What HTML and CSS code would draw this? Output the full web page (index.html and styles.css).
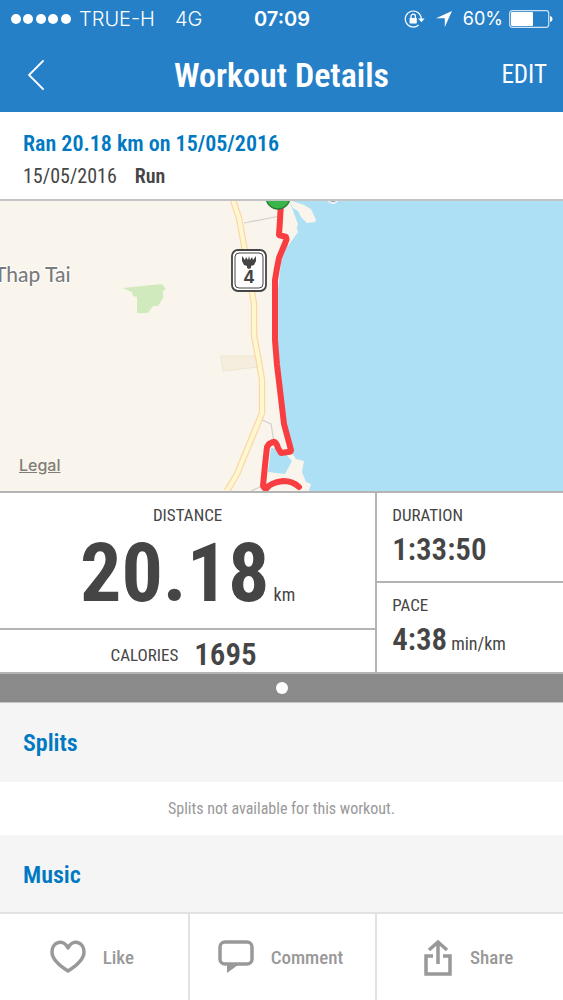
FILE: index.html
```
<!DOCTYPE html>
<html lang="en">

<head>
    <meta charset="UTF-8">
    <meta name="viewport" content="width=device-width, initial-scale=1.0">
    <link rel="stylesheet" href="styles.css">
    <title>Workout Details</title>
</head>

<body>

    <header class="top">
        <div class="status-bar">
            <div class="status-left">
                <svg class="signal" width="60" height="10" viewBox="0 0 60 10" fill="#fff">
                    <circle cx="5" cy="5" r="5" />
                    <circle cx="17" cy="5" r="5" />
                    <circle cx="30" cy="5" r="5" />
                    <circle cx="42" cy="5" r="5" />
                    <circle cx="55" cy="5" r="5" />
                </svg>
                <span class="carrier">TRUE-H</span>
                <span>4G</span>
            </div>
            <span class="clock">07:09</span>
            <div class="status-right">
                <svg width="21" height="18" viewBox="0 0 21 18" fill="none" stroke="#fff">
                    <path d="M17.3 9A8 8 0 1 0 14.6 15" stroke-width="1.2" />
                    <path d="M14.2 8.5h6.4l-3.2 3.8z" fill="#fff" stroke="none" />
                    <path d="M7 8.3V6.4a2.2 2.2 0 0 1 4.4 0v1.9" stroke-width="1.3" />
                    <rect x="5.6" y="8" width="7.2" height="5.4" rx="0.6" fill="#fff" stroke="none" />
                </svg>
                <svg class="location" width="16" height="16" viewBox="0 0 16 16" fill="#fff">
                    <path d="M16 0L8.8 16V7.3H0z" />
                </svg>
                <span class="charge">60%</span>
                <svg class="battery" width="44" height="18" viewBox="0 0 44 18">
                    <rect x="0.7" y="0.7" width="39" height="16.6" rx="2.5" fill="none" stroke="#cfe3f4" stroke-width="1.2" />
                    <rect x="2" y="2" width="22" height="14" rx="1" fill="#fff" />
                    <path d="M41 6q2.6 0.5 2.6 3T41 12z" fill="#fff" />
                </svg>
            </div>
        </div>
        <nav class="nav-bar">
            <button class="back" aria-label="Back">
                <svg width="16" height="30" viewBox="0 0 16 30" fill="none" stroke="#fff" stroke-width="1.8" stroke-linecap="round">
                    <path d="M15 1L1 15L15 29" />
                </svg>
            </button>
            <h1>Workout Details</h1>
            <button class="edit">EDIT</button>
        </nav>
    </header>

    <section class="summary">
        <h2>Ran 20.18 km on 15/05/2016</h2>
        <p><span>15/05/2016</span><strong>Run</strong></p>
    </section>

    <section class="map">
        <svg class="map-canvas" viewBox="0 1 563 290" preserveAspectRatio="xMidYMid slice">
            <rect width="563" height="291" fill="#f9f4ec" />
            <!-- sea -->
            <path d="M289 0L298 24L294 35L287 46L281 62L278 90L277 140L280 190L285 225L291 252L296 259L304 261L302 272L306 282L311 284L309 291H563V0z" fill="#ade0f5" />
            <path d="M289 0L304 5L311 9L316 20L315 22L307 23L301 17L298 11L293 8z" fill="#f9f4ec" />
            <path d="M271 248L281 249L292 261L285 274L268 272z" fill="#ade0f5" />
            <circle cx="333" cy="-2" r="5" fill="#98999b" stroke="#eef4f6" stroke-width="2" />
            <!-- land -->
            <path d="M287 0L298 32L288 46L282 36L282 0z" fill="#f9f4ec" />
            <path d="M123 88L162 84L166 89L163 91V98L158 106H153L148 113H137V97L133 96L132 92z" fill="#d0eabe" />
            <path d="M221 156H258V167L223 171z" fill="#f5edde" stroke="#efe5d0" />
            <path d="M244 23L280 16M262 220L271 224L274 242M251 291L262 286" fill="none" stroke="#d3d0c9" stroke-width="1.2" />
            <!-- highway -->
            <path d="M233 0L239 18L247 62L254 104L254 135L259 162L262 180V213L251 240L237 274L227 291" fill="none" stroke="#fad9a3" stroke-width="6.5" />
            <path d="M233 0L239 18L247 62L254 104L254 135L259 162L262 180V213L251 240L237 274L227 291" fill="none" stroke="#fff6d2" stroke-width="4" />
            <!-- route -->
            <path d="M281 2L280 20L279 35L286 37Q287 39 286 41L279 58L277 68L275 80V140L277 165L280 190L284 224L291 250Q291 252 288 252L281 253L278 248Q276 241 273 242L269 244L267 247L265 265L263 286Q265 290 267 288Q270 283 283 281Q293 281 299 287" fill="none" stroke="#f83e40" stroke-width="6" stroke-linejoin="round" stroke-linecap="round" />
            <circle cx="278" cy="-3" r="12" fill="#39b54a" stroke="#267d35" stroke-width="1.3" />
            <!-- road shield -->
            <rect x="232" y="50" width="34" height="41" rx="6" fill="#fff" stroke="#454545" stroke-width="1.8" />
            <rect x="235" y="53" width="28" height="35" rx="4" fill="none" stroke="#454545" />
            <path d="M242 56L245 60L246 57L248 60L249 56L250 60L252 57L253 60L256 56L256 61L254 65L251 66L251 68L249 69L247 68L247 66L244 65L242 61z" fill="#454545" />
            <text class="road-number" x="249" y="83" text-anchor="middle">4</text>
            <text class="town" x="-6" y="82">Thap Tai</text>
        </svg>
        <a class="legal" href="#">Legal</a>
    </section>

    <section class="stats">
        <div class="stats-main">
            <div class="distance">
                <h3>DISTANCE</h3>
                <p><strong>20.18</strong><span class="unit">km</span></p>
            </div>
            <div class="calories">
                <h3>CALORIES</h3>
                <strong>1695</strong>
            </div>
        </div>
        <div class="stats-side">
            <div class="stat">
                <h3>DURATION</h3>
                <p><strong>1:33:50</strong></p>
            </div>
            <div class="stat">
                <h3>PACE</h3>
                <p><strong>4:38</strong><span class="unit">min/km</span></p>
            </div>
        </div>
    </section>

    <div class="pager"><span class="dot"></span></div>

    <section class="details">
        <h2>Splits</h2>
        <p>Splits not available for this workout.</p>
        <h2>Music</h2>
    </section>

    <footer class="actions">
        <button>
            <svg width="36" height="34" viewBox="0 0 36 34" fill="none" stroke="#999" stroke-width="3.5" stroke-linejoin="round">
                <path d="M18 31C10 26 2 20 2 12C2 1 14 -1 18 8C22 -1 34 1 34 12C34 20 26 26 18 31z" />
            </svg>
            <span>Like</span>
        </button>
        <button>
            <svg width="36" height="34" viewBox="0 0 36 34" fill="none" stroke="#999" stroke-width="3.5">
                <rect x="2" y="2" width="32" height="22" rx="5" />
                <path d="M9 25V33L20 25z" fill="#999" stroke="none" />
            </svg>
            <span>Comment</span>
        </button>
        <button>
            <svg width="30" height="37" viewBox="0 0 30 37" fill="none" stroke="#999" stroke-width="3.5">
                <path d="M10 17H3V35H27V17H20" />
                <path d="M15 25V3M6 11L15 3L24 11" />
            </svg>
            <span>Share</span>
        </button>
    </footer>

</body>

</html>
```
FILE: styles.css
```
* {
    box-sizing: border-box;
}

body {
    display: flex;
    flex-direction: column;
    min-height: 100vh;
    margin: 0;
    background-color: #f5f5f5;
    color: #454545;
    font-family: 'Roboto Condensed', Roboto, sans-serif;
}

h1, h2, h3, p {
    margin: 0;
}

button {
    border: none;
    background: none;
    padding: 0;
    font-family: inherit;
    cursor: pointer;
}

svg {
    display: block;
    flex-shrink: 0;
}

.top {
    background-color: #2680c8;
    color: #fff;
}

.status-bar {
    display: grid;
    grid-template-columns: 1fr auto 1fr;
    align-items: center;
    height: 37px;
    padding: 0 10px 0 11px;
    font-family: Inter, sans-serif;
    font-size: 20px;
    font-weight: 300;
}

.status-left,
.status-right {
    display: flex;
    align-items: center;
}

.status-right {
    justify-content: flex-end;
}

.carrier {
    margin: 0 20px 0 8px;
}

.clock {
    font-weight: 600;
}

.charge {
    font-size: 18px;
    font-weight: 400;
}

.location {
    margin: 0 11px;
}

.battery {
    margin-left: 6px;
}

.nav-bar {
    display: grid;
    grid-template-columns: 1fr auto 1fr;
    align-items: center;
    height: 75px;
    padding: 0 16px;
}

.nav-bar h1 {
    font-size: 34px;
    font-weight: 600;
    line-height: 40px;
}

.back {
    justify-self: start;
    padding: 0 12px;
}

.edit {
    justify-self: end;
    color: #fff;
    font-size: 25px;
}

.summary {
    padding: 16px 23px 7px;
    border-bottom: 2px solid #c4c4c4;
    background-color: #fff;
}

.summary h2 {
    color: #0079c2;
    font-size: 22px;
    font-weight: 600;
    line-height: 32px;
}

.summary p {
    display: flex;
    gap: 18px;
    font-size: 20px;
    line-height: 32px;
}

.summary strong {
    font-weight: 600;
}

.map {
    position: relative;
    overflow: hidden;
}

.map-canvas {
    width: 100%;
}

.town {
    fill: #7b7b7b;
    stroke: #fff;
    stroke-width: 2px;
    paint-order: stroke;
    font-family: Lato, sans-serif;
    font-size: 21px;
    font-weight: 500;
}

.road-number {
    fill: #454545;
    font-family: Inter, sans-serif;
    font-size: 17px;
    font-weight: 700;
}

.legal {
    position: absolute;
    bottom: 16px;
    left: 19px;
    color: #807e79;
    font-family: Inter, sans-serif;
    font-size: 16px;
    font-weight: 500;
}

.stats {
    display: grid;
    grid-template-columns: 67% 33%;
    border-top: 2px solid #b4b4b4;
    border-bottom: 2px solid #b4b4b4;
    background-color: #fff;
}

.stats h3 {
    font-size: 17px;
    font-weight: 400;
    line-height: 20px;
}

.unit {
    font-size: 18px;
}

.stats-main {
    border-right: 2px solid #b4b4b4;
}

.distance {
    height: 137px;
    padding-top: 12px;
    border-bottom: 2px solid #b4b4b4;
    text-align: center;
}

.distance p {
    display: flex;
    justify-content: center;
    align-items: baseline;
    gap: 4px;
    line-height: 96px;
}

.distance strong {
    font-size: 82px;
}

.calories {
    display: flex;
    justify-content: center;
    align-items: center;
    gap: 16px;
    height: 42px;
    padding: 8px 8px 0 0;
}

.calories strong,
.stat strong {
    font-size: 31px;
    font-weight: 600;
    line-height: 36px;
}

.stats-side {
    display: grid;
    grid-template-rows: 88px 1fr;
}

.stat {
    padding: 12px 0 0 15px;
}

.stat + .stat {
    border-top: 2px solid #b4b4b4;
}

.stat p {
    display: flex;
    align-items: baseline;
    gap: 4px;
    padding-top: 7px;
}

.pager {
    display: flex;
    justify-content: center;
    align-items: center;
    height: 29px;
    border-bottom: 1px solid #c4c4c4;
    background-color: #8b8b8b;
}

.dot {
    width: 12px;
    height: 12px;
    border-radius: 50%;
    background-color: #fff;
}

.details h2 {
    padding: 24px 23px 23px;
    color: #0079c2;
    font-size: 24px;
    font-weight: 600;
    line-height: 32px;
}

.details h2:last-child {
    padding-bottom: 16px;
}

.details p {
    background-color: #fff;
    color: #999;
    font-size: 16px;
    line-height: 53px;
    text-align: center;
}

.actions {
    display: grid;
    grid-template-columns: 1fr 1fr 1fr;
    flex-shrink: 0;
    height: 88px;
    margin-top: auto;
    border-top: 2px solid #e2e2e2;
    background-color: #fff;
}

.actions button {
    display: flex;
    justify-content: center;
    align-items: center;
    gap: 17px;
    padding-right: 4px;
    color: #999;
    font-size: 19px;
    font-weight: 500;
}

.actions button + button {
    border-left: 2px solid #e2e2e2;
}
```
